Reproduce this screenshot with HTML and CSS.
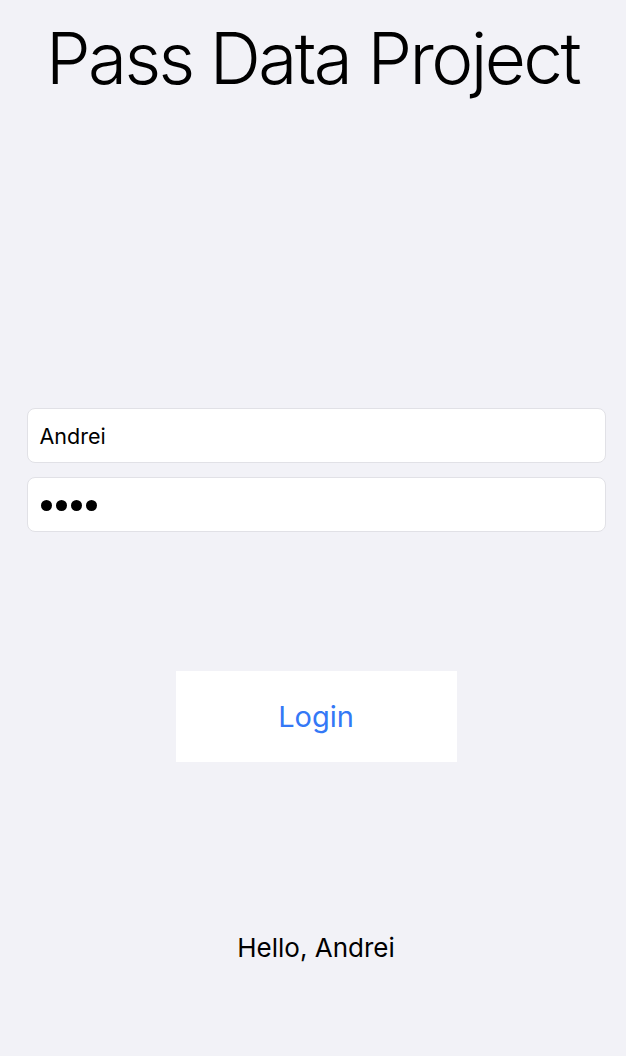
FILE: index.html
```html
<!DOCTYPE html>
<html>
<head>
<meta charset="utf-8">
<link rel="stylesheet" href="styles.css">
</head>
<body>
<div class="screen">
  <h1 class="title">Pass Data Project</h1>
  <div class="fields">
    <div class="field">Andrei</div>
    <div class="field dots"><span></span><span></span><span></span><span></span></div>
  </div>
  <div class="button">Login</div>
  <div class="greeting">Hello, Andrei</div>
</div>
</body>
</html>
```
FILE: styles.css
```css
html, body {
  margin: 0;
  padding: 0;
  background: #f2f2f7;
}
.screen {
  box-sizing: border-box;
  width: 626px;
  height: 1056px;
  padding-left: 6px;
  display: flex;
  flex-direction: column;
  align-items: center;
  font-family: Inter, "Liberation Sans", sans-serif;
  color: #000;
}
.title {
  margin: 18px 0 0 0;
  padding-right: 7px;
  font-size: 71px;
  font-weight: 300;
  line-height: 80px;
  letter-spacing: -2.6px;
}
.fields {
  margin-top: 310px;
  width: 579px;
  display: flex;
  flex-direction: column;
  gap: 14px;
}
.field {
  box-sizing: border-box;
  height: 55px;
  background: #fff;
  border: 1px solid #e1e1e6;
  border-radius: 8px;
  padding: 0 12px;
  display: flex;
  align-items: center;
  font-size: 21.5px;
}
.dots {
  gap: 4px;
  padding-left: 13px;
  padding-top: 2px;
}
.dots span {
  width: 11px;
  height: 11px;
  border-radius: 50%;
  background: #000;
}
.button {
  margin-top: 139px;
  width: 281px;
  height: 91px;
  background: #fff;
  color: #3478f6;
  font-size: 29px;
  display: flex;
  align-items: center;
  justify-content: center;
}
.greeting {
  margin-top: 170px;
  font-size: 26px;
}
```
